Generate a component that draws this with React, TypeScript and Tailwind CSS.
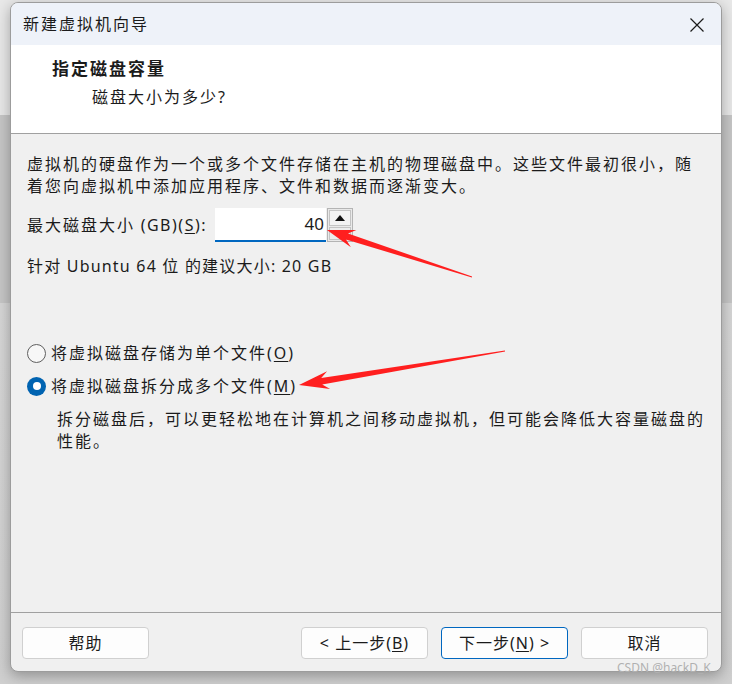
import React from 'react';

type Pt = [number, number];

// tapered red arrow, computed from tail to tip
function arrowPoints(tail: Pt, tip: Pt, headLen: number, headHalf: number, shaftHalf: number, notch: number) {
  const dx = tip[0] - tail[0];
  const dy = tip[1] - tail[1];
  const len = Math.hypot(dx, dy);
  const ux = dx / len;
  const uy = dy / len;
  const nx = -uy;
  const ny = ux;
  const base: Pt = [tip[0] - ux * (headLen - notch), tip[1] - uy * (headLen - notch)];
  const wing: Pt = [tip[0] - ux * headLen, tip[1] - uy * headLen];
  const pts: Pt[] = [
    [tail[0] + nx * 0.4, tail[1] + ny * 0.4],
    [base[0] + nx * shaftHalf, base[1] + ny * shaftHalf],
    [wing[0] + nx * headHalf, wing[1] + ny * headHalf],
    tip,
    [wing[0] - nx * headHalf, wing[1] - ny * headHalf],
    [base[0] - nx * shaftHalf, base[1] - ny * shaftHalf],
    [tail[0] - nx * 0.4, tail[1] - ny * 0.4],
  ];
  return pts.map((p) => `${p[0].toFixed(1)},${p[1].toFixed(1)}`).join(' ');
}

function Radio({ checked }: { checked?: boolean }) {
  if (checked) {
    return (
      <span className="flex h-[19px] w-[19px] shrink-0 items-center justify-center rounded-full bg-[#0063b1]">
        <span className="h-[8px] w-[8px] rounded-full bg-white" />
      </span>
    );
  }
  return <span className="h-[19px] w-[19px] shrink-0 rounded-full border border-[#5f5f5f] bg-[#f7f7f7]" />;
}

function Button({ children, primary }: { children: React.ReactNode; primary?: boolean }) {
  return (
    <button
      className={
        'flex h-[32px] w-[127px] items-center justify-center rounded-[4px] bg-[#fdfdfd] text-[16px] tracking-[1px] text-[#1b1b1b] ' +
        (primary ? 'border border-[#0067c0]' : 'border border-[#d0d0d0]')
      }
    >
      {children}
    </button>
  );
}

export default function App() {
  return (
    <div className="relative h-[684px] w-[732px] overflow-hidden bg-[linear-gradient(to_bottom,#e8e8e8_0px,#e8e8e8_115px,#c6c6c6_115px,#c6c6c6_303px,#d6d6d6_303px,#cfcfcf_684px)] pl-[10px] pt-[2px] font-['Noto_Sans','Noto_Sans_CJK_SC',sans-serif] text-[#1b1b1b]">
      <div className="relative flex h-[670px] w-[712px] flex-col overflow-hidden rounded-[8px] border border-[#9c9c9c] bg-[#f0f0f0] shadow-[0_4px_14px_rgba(0,0,0,0.3)]">
        {/* title bar */}
        <div className="flex h-[42px] items-center justify-between bg-[#eef2f9] pl-[12px] pr-[16px]">
          <span className="text-[16px] tracking-[2px]">新建虚拟机向导</span>
          <svg width="16" height="16" viewBox="0 0 16 16" className="mt-[1px]">
            <path d="M1.5 1.5 L14.5 14.5 M14.5 1.5 L1.5 14.5" stroke="#1b1b1b" strokeWidth="1.2" fill="none" />
          </svg>
        </div>

        {/* header */}
        <div className="h-[89px] border-b border-[#a0a0a0] bg-white pt-[12px]">
          <div className="pl-[41px] text-[17px] font-bold leading-[24px] tracking-[2px]">指定磁盘容量</div>
          <div className="mt-[5px] pl-[81px] text-[16px] leading-[22px] tracking-[2px]">磁盘大小为多少?</div>
        </div>

        {/* body */}
        <div className="h-[479px] border-b border-[#a0a0a0] pl-[16px] pt-[19px] text-[16px] leading-[22px] tracking-[2px]">
          <p>虚拟机的硬盘作为一个或多个文件存储在主机的物理磁盘中。这些文件最初很小，随</p>
          <p>着您向虚拟机中添加应用程序、文件和数据而逐渐变大。</p>

          <div className="mt-[11px] flex h-[34px] items-center">
            <span>
              最大磁盘大小<span className="tracking-[1.5px]"> (GB)(<span className="underline underline-offset-2">S</span>):</span>
            </span>
            <div className="ml-[8px] flex h-[34px] w-[111px] items-center justify-end border-b-2 border-[#0067c0] bg-white pr-[2px] text-[17px] tracking-[0px]">
              40
            </div>
            <div className="ml-[1px] flex h-[34px] w-[26px] flex-col border border-[#b4b4b4] bg-[#e9e9e9] p-[1px]">
              <div className="flex h-[16px] items-center justify-center border border-[#c4c4c4] bg-[#f2f2f2]">
                <svg width="10" height="6" viewBox="0 0 10 6">
                  <path d="M0 6 L5 0 L10 6 Z" fill="#111" />
                </svg>
              </div>
              <div className="mt-[1px] flex flex-1 items-center justify-center border border-[#c4c4c4] bg-[#ececec]">
                <svg width="10" height="6" viewBox="0 0 10 6">
                  <path d="M0 0 L5 6 L10 0 Z" fill="#111" />
                </svg>
              </div>
            </div>
          </div>

          <p className="mt-[13px] tracking-[1.2px]">针对 Ubuntu 64 位 的建议大小: 20 GB</p>

          <div className="mt-[65px] flex h-[22px] items-center gap-[5px]">
            <Radio />
            <span>
              将虚拟磁盘存储为单个文件(<span className="underline underline-offset-2">O</span>)
            </span>
          </div>
          <div className="mt-[11px] flex h-[22px] items-center gap-[5px]">
            <Radio checked />
            <span>
              将虚拟磁盘拆分成多个文件(<span className="underline underline-offset-2">M</span>)
            </span>
          </div>
          <div className="mt-[11px] pl-[30px]">
            <p>拆分磁盘后，可以更轻松地在计算机之间移动虚拟机，但可能会降低大容量磁盘的</p>
            <p>性能。</p>
          </div>
        </div>

        {/* footer */}
        <div className="flex flex-1 items-start pl-[11px] pr-[13px] pt-[14px]">
          <Button>帮助</Button>
          <div className="ml-auto flex gap-[13px]">
            <Button>
              &lt; 上一步(<span className="underline underline-offset-2">B</span>)
            </Button>
            <Button primary>
              下一步(<span className="underline underline-offset-2">N</span>) &gt;
            </Button>
            <Button>取消</Button>
          </div>
        </div>
      </div>

      {/* watermark over the window edge */}
      <span className="absolute left-[617px] top-[660px] whitespace-nowrap text-[12px] leading-[16px] text-[#b0b0b0]">CSDN @hackD_K</span>

      {/* annotation arrows */}
      <svg className="pointer-events-none absolute inset-0" width="732" height="684" viewBox="0 0 732 684">
        <polygon points={arrowPoints([472, 277], [327, 230], 28, 9, 3.2, 7)} fill="#ff1f1f" />
        <polygon points={arrowPoints([505, 351], [299, 385], 30, 9, 3.2, 7)} fill="#ff1f1f" />
      </svg>
    </div>
  );
}
